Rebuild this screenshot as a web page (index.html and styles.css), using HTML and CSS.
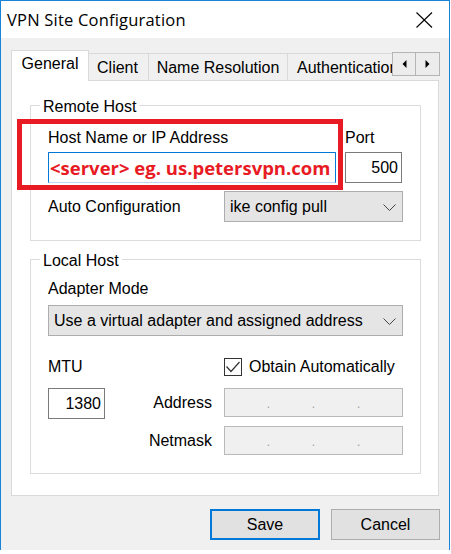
FILE: index.html
```html
<!DOCTYPE html>
<html lang="en">
<head>
<meta charset="utf-8">
<title>VPN Site Configuration</title>
<link rel="stylesheet" href="styles.css">
</head>
<body>
<div class="window">
  <div class="titlebar">
    <span class="title">VPN Site Configuration</span>
    <svg class="close" width="17" height="16" viewBox="0 0 17 16"><path d="M0.5 0.5 L16 15.5 M16 0.5 L0.5 15.5" stroke="#000" stroke-width="1.1" fill="none"/></svg>
  </div>
  <div class="body">
    <div class="tabstrip">
      <div class="tabs">
        <div class="tab tab-active">General</div>
        <div class="tab tab-client">Client</div>
        <div class="tab tab-name">Name Resolution</div>
        <div class="tab tab-auth">Authentication</div>
      </div>
      <div class="scroller">
        <span class="scroll-btn"><svg width="5" height="8" viewBox="0 0 5 8"><path d="M4.5 0 L4.5 8 L0.5 4 Z" fill="#000"/></svg></span>
        <span class="scroll-btn"><svg width="5" height="8" viewBox="0 0 5 8"><path d="M0.5 0 L0.5 8 L4.5 4 Z" fill="#000"/></svg></span>
      </div>
    </div>
    <div class="panel">
      <fieldset class="group group-remote">
        <legend class="group-title">Remote Host</legend>
        <div class="host-grid">
          <span class="lbl">Host Name or IP Address</span>
          <span class="lbl">Port</span>
          <div class="textbox host-box">&lt;server&gt; eg. us.petersvpn.com</div>
          <div class="textbox num">500</div>
        </div>
        <div class="auto-row">
          <span class="lbl">Auto Configuration</span>
          <div class="combo combo-short">
            <span>ike config pull</span>
            <svg class="chev" width="13" height="7" viewBox="0 0 13 7"><path d="M0.5 0.5 L6.5 6.5 L12.5 0.5" stroke="#444" stroke-width="1" fill="none"/></svg>
          </div>
        </div>
      </fieldset>
      <fieldset class="group group-local">
        <legend class="group-title">Local Host</legend>
        <div class="lbl adapter-label">Adapter Mode</div>
        <div class="combo combo-wide">
          <span>Use a virtual adapter and assigned address</span>
          <svg class="chev" width="13" height="7" viewBox="0 0 13 7"><path d="M0.5 0.5 L6.5 6.5 L12.5 0.5" stroke="#444" stroke-width="1" fill="none"/></svg>
        </div>
        <div class="net-row net-row-top">
          <span class="lbl">MTU</span>
          <span></span>
          <div class="check-wrap">
            <span class="checkbox"><svg width="18" height="18" viewBox="0 0 18 18"><path d="M2.5 8.5 L7 13.5 L15.5 4" stroke="#333" stroke-width="1.2" fill="none"/></svg></span>
            <span class="lbl">Obtain Automatically</span>
          </div>
        </div>
        <div class="net-row net-row-mid">
          <div class="textbox num mtu-box">1380</div>
          <span class="lbl side-lbl">Address</span>
          <div class="ipbox"><span></span><i>.</i><span></span><i>.</i><span></span><i>.</i><span></span></div>
        </div>
        <div class="net-row net-row-bot">
          <span></span>
          <span class="lbl side-lbl">Netmask</span>
          <div class="ipbox"><span></span><i>.</i><span></span><i>.</i><span></span><i>.</i><span></span></div>
        </div>
      </fieldset>
      <div class="annotation"></div>
    </div>
    <div class="buttons">
      <div class="btn btn-default">Save</div>
      <div class="btn">Cancel</div>
    </div>
  </div>
</div>
</body>
</html>
```

FILE: styles.css
```css
html, body {
  margin: 0;
  padding: 0;
  background: #ffffff;
}

.window {
  width: 450px;
  height: 550px;
  box-sizing: border-box;
  border: 1px solid #1883d7;
  border-bottom: none;
  background: #f0f0f0;
  font-family: "Liberation Sans", Arial, sans-serif;
  font-size: 16px;
  line-height: 18px;
  color: #000;
  display: flex;
  flex-direction: column;
}

.titlebar {
  height: 37px;
  background: #ffffff;
  display: flex;
  align-items: center;
  justify-content: space-between;
  padding: 0 16px 0 6px;
}

.title {
  font-family: "Open Sans", "Noto Sans", sans-serif;
  font-size: 16.5px;
  letter-spacing: 0.2px;
  line-height: 20px;
  padding-top: 1px;
}

.close {
  display: block;
}

.body {
  flex: 1;
  padding: 12px 10px 0 10px;
  display: flex;
  flex-direction: column;
}

.tabstrip {
  display: flex;
  height: 31px;
  margin-right: -1px;
}

.tabs {
  flex: 1;
  display: flex;
  align-items: flex-start;
  overflow: hidden;
  position: relative;
  z-index: 1;
}

.tab {
  flex: none;
  box-sizing: border-box;
  height: 27px;
  margin-top: 3px;
  padding-top: 5px;
  text-align: center;
  white-space: nowrap;
  background: #f0f0f0;
  border: 1px solid #d9d9d9;
  border-bottom: none;
}

.tab + .tab {
  border-left: none;
}

.tab-active {
  width: 78px;
  height: 31px;
  margin-top: 0;
  padding-top: 4px;
  background: #ffffff;
}

.tab-client {
  width: 60px;
  padding-right: 2px;
}

.tab-name {
  width: 139px;
}

.tab-auth {
  padding: 5px 10px 0 9px;
}

.scroller {
  display: flex;
  margin-top: 2px;
  height: 24px;
}

.scroll-btn {
  width: 24px;
  height: 24px;
  box-sizing: border-box;
  border: 1px solid #b4b4b4;
  background: #ececec;
  display: flex;
  align-items: center;
  justify-content: center;
}

.scroll-btn + .scroll-btn {
  border-left: none;
}

.panel {
  position: relative;
  margin-top: -1px;
  height: 416px;
  box-sizing: border-box;
  background: #ffffff;
  border: 1px solid #d9d9d9;
  display: flex;
  flex-direction: column;
}

.group {
  border: 1px solid #dcdcdc;
  margin: 0 17px 0 18px;
  padding: 0 17px 18px 17px;
  min-inline-size: 0;
}

.group-remote {
  margin-top: 13px;
  padding-top: 13px;
}

.group-local {
  margin-top: 7px;
  padding-top: 10px;
}

.group-title {
  margin-left: -8px;
  padding: 4px 3px 0 3px;
  line-height: 18px;
}

.lbl {
  white-space: nowrap;
}

.host-grid {
  display: grid;
  grid-template-columns: 288px 57px;
  column-gap: 9px;
  row-gap: 5px;
}

.textbox {
  height: 31px;
  box-sizing: border-box;
  background: #ffffff;
  border: 1px solid #7a7a7a;
  display: flex;
  align-items: center;
}

.num {
  justify-content: flex-end;
  padding-right: 3px;
}

.host-box {
  border-color: #0078d7;
  border-bottom-color: #c0d8ee;
  color: #e81b25;
  font-family: "Open Sans", "Noto Sans", sans-serif;
  font-weight: 700;
  font-size: 18.5px;
  padding-left: 1px;
  white-space: nowrap;
  overflow: hidden;
}

.auto-row {
  margin-top: 8px;
  display: flex;
  align-items: center;
  justify-content: space-between;
}

.combo {
  height: 31px;
  box-sizing: border-box;
  background: #e5e5e5;
  border: 1px solid #adadad;
  display: flex;
  align-items: center;
  justify-content: space-between;
  padding: 1px 6px 0 5px;
  white-space: nowrap;
}

.combo-short {
  width: 179px;
}

.chev {
  display: block;
}

.adapter-label {
  margin-top: 0;
}

.combo-wide {
  margin-top: 7px;
}

.net-row {
  display: grid;
  grid-template-columns: 57px 1fr 179px;
  align-items: center;
}

.net-row-top {
  margin-top: 22px;
}

.net-row-mid {
  margin-top: 10px;
}

.net-row-bot {
  margin-top: 7px;
}

.check-wrap {
  display: flex;
  align-items: center;
  gap: 7px;
}

.checkbox {
  width: 18px;
  height: 18px;
  box-sizing: border-box;
  border: 1px solid #333333;
  background: #ffffff;
  display: flex;
}

.checkbox svg {
  margin: -1px;
}

.side-lbl {
  text-align: right;
  padding-right: 12px;
}

.mtu-box {
  height: 31px;
  margin-top: 2px;
}

.ipbox {
  height: 29px;
  box-sizing: border-box;
  background: #f0f0f0;
  border: 1px solid #b9b9b9;
  display: flex;
  align-items: flex-end;
  padding: 0 0 6px 0;
}

.ipbox span {
  flex: 1;
}

.ipbox i {
  font-style: normal;
  color: #9a9a9a;
  font-size: 12px;
  line-height: 12px;
}

.annotation {
  position: absolute;
  left: 5px;
  top: 38px;
  width: 326px;
  height: 71px;
  box-sizing: border-box;
  border: 5px solid #e81b25;
}

.buttons {
  display: flex;
  justify-content: flex-end;
  gap: 11px;
  margin-top: 13px;
  margin-right: -1px;
}

.btn {
  width: 109px;
  height: 31px;
  box-sizing: border-box;
  background: #e1e1e1;
  border: 1px solid #adadad;
  display: flex;
  align-items: center;
  justify-content: center;
}

.btn-default {
  width: 110px;
  border: 2px solid #0078d7;
}
```
